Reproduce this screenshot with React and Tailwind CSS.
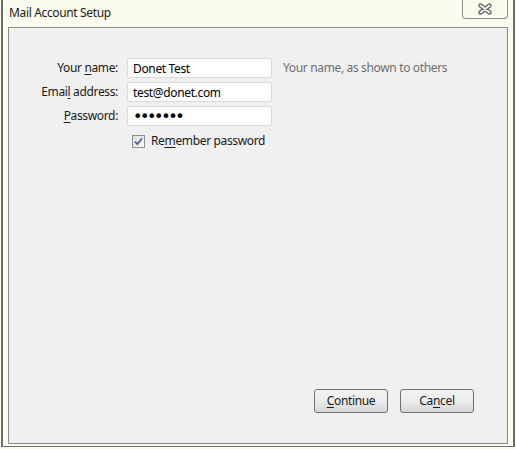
import React, { useState } from "react";

const font = { fontFamily: '"Noto Sans", "Open Sans", sans-serif' };

// underlined access key helper
function Key({ children }) {
  return <span className="underline underline-offset-2">{children}</span>;
}

function CloseGlyph() {
  return (
    <svg width="16" height="12" viewBox="0 0 16 12">
      <path d="M3.5 2.5 L12.5 9.5 M12.5 2.5 L3.5 9.5" stroke="#5a5e63" strokeWidth="4.4" strokeLinecap="round" />
      <path d="M3.5 2.5 L12.5 9.5 M12.5 2.5 L3.5 9.5" stroke="#f4f4f4" strokeWidth="2" strokeLinecap="round" />
    </svg>
  );
}

export default function App() {
  const [name, setName] = useState("Donet Test");
  const [email, setEmail] = useState("test@donet.com");
  const [password, setPassword] = useState("1234567");
  const [remember, setRemember] = useState(true);

  const inputCls =
    "w-[145px] h-[20px] px-[5px] bg-white border border-[#dadada] rounded-[2px] text-black outline-none";

  return (
    <div className="w-[516px] h-[449px] bg-[#fbfbee] overflow-hidden tracking-[-0.35px]" style={font}>
      <div className="h-[447px] w-[514px] ml-[1px] border-l-2 border-r-2 border-b border-[#6d6d6d] flex flex-col">
        {/* Title bar */}
        <div className="h-[27px] flex items-start justify-between pl-[6px] pr-[5px]">
          <span className="mt-[4px] text-[12px] text-[#1a1a1a]">Mail Account Setup</span>
          <button className="w-[46px] h-[19px] border border-t-0 border-[#8c8c8c] rounded-b-[4px] bg-[#fbfbee] flex items-center justify-center">
            <CloseGlyph />
          </button>
        </div>

        {/* Content panel */}
        <div className="mx-[5px] h-[417px] border border-[#8a8a8a] bg-[#f0f0f0] flex flex-col">
          <div className="pt-[30px] flex flex-col gap-[4px] text-[12px] text-[#1a1a1a]">
            <div className="flex items-center">
              <label className="w-[109px] text-right">
                Your <Key>n</Key>ame:
              </label>
              <input className={`ml-[9px] text-[12px] ${inputCls}`} value={name} onChange={(e) => setName(e.target.value)} />
              <span className="ml-[11px] text-[#6e6e6e]">Your name, as shown to others</span>
            </div>
            <div className="flex items-center">
              <label className="w-[109px] text-right">
                Emai<Key>l</Key> address:
              </label>
              <input className={`ml-[9px] text-[12px] ${inputCls}`} value={email} onChange={(e) => setEmail(e.target.value)} />
            </div>
            <div className="flex items-center">
              <label className="w-[109px] text-right">
                <Key>P</Key>assword:
              </label>
              <input
                type="password"
                className={`ml-[9px] text-[16px] leading-none tracking-[-2.4px] ${inputCls}`}
                style={{ fontFamily: '"DejaVu Sans", sans-serif' }}
                value={password}
                onChange={(e) => setPassword(e.target.value)}
              />
            </div>
            <label className="flex items-center ml-[123px] mt-[2px]">
              <span
                onClick={() => setRemember(!remember)}
                className="w-[13px] h-[13px] border border-[#8e8f8f] bg-gradient-to-br from-[#dcdcdc] to-[#fbfbfb] flex items-center justify-center"
              >
                {remember && (
                  <svg width="9" height="9" viewBox="0 0 9 9">
                    <path d="M1 4.5 L3.4 7.2 L8 1.2" stroke="#4a5f97" strokeWidth="1.8" fill="none" />
                  </svg>
                )}
              </span>
              <span className="ml-[6px]">
                Re<Key>m</Key>ember password
              </span>
            </label>
          </div>

          {/* Buttons */}
          <div className="mt-auto mb-[30px] mr-[33px] flex justify-end gap-[12px] text-[12px] text-[#1a1a1a]">
            <button className="w-[74px] h-[24px] border border-[#707070] rounded-[3px] bg-gradient-to-b from-[#f2f2f2] via-[#ebebeb] to-[#d6d6d6]">
              <Key>C</Key>ontinue
            </button>
            <button className="w-[74px] h-[24px] border border-[#707070] rounded-[3px] bg-gradient-to-b from-[#f2f2f2] via-[#ebebeb] to-[#d6d6d6]">
              Ca<Key>n</Key>cel
            </button>
          </div>
        </div>
      </div>
    </div>
  );
}
